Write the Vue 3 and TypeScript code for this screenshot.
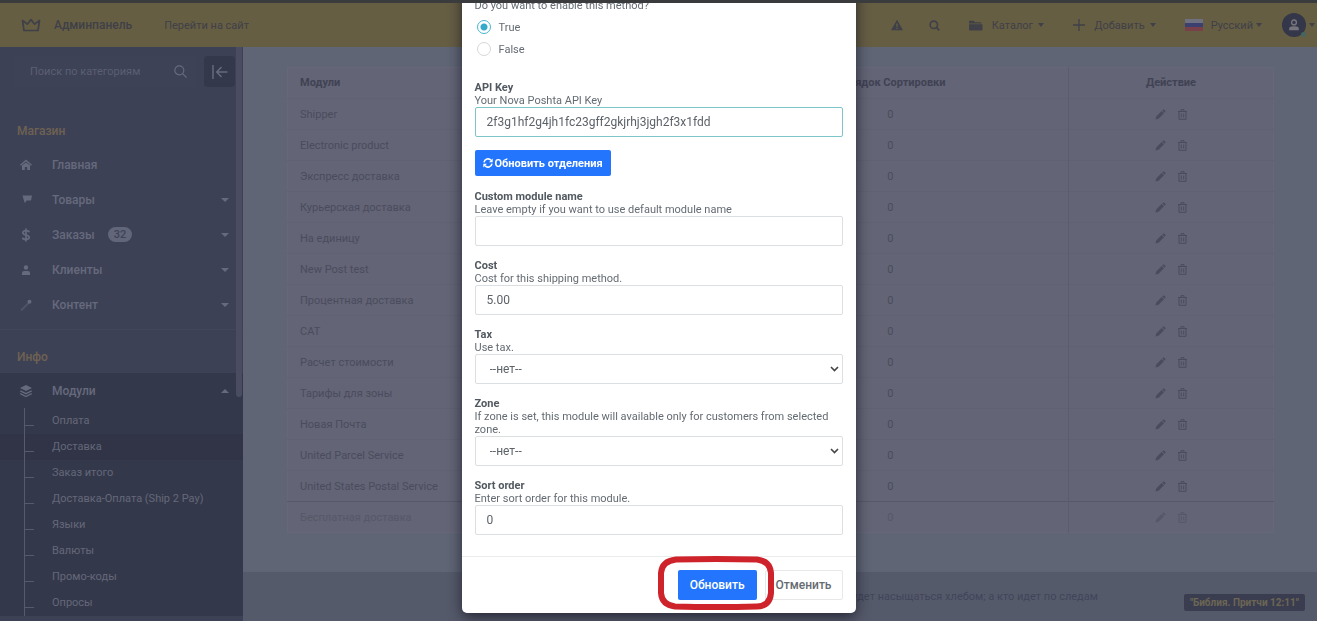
<script setup lang="ts">
import { ref } from 'vue'

interface NavItem {
  label: string
  icon: string
  badge?: string
  expandable: boolean
}

const shopItems: NavItem[] = [
  { label: 'Главная', icon: 'home', expandable: false },
  { label: 'Товары', icon: 'flag', expandable: true },
  { label: 'Заказы', icon: 'dollar', badge: '32', expandable: true },
  { label: 'Клиенты', icon: 'user', expandable: true },
  { label: 'Контент', icon: 'wand', expandable: true },
]

const moduleLinks: string[] = [
  'Оплата',
  'Доставка',
  'Заказ итого',
  'Доставка-Оплата (Ship 2 Pay)',
  'Языки',
  'Валюты',
  'Промо-коды',
  'Опросы',
]
const activeLink = 'Доставка'

const modules: { name: string; order: number; disabled?: boolean }[] = [
  { name: 'Shipper', order: 0 },
  { name: 'Electronic product', order: 0 },
  { name: 'Экспресс доставка', order: 0 },
  { name: 'Курьерская доставка', order: 0 },
  { name: 'На единицу', order: 0 },
  { name: 'New Post test', order: 0 },
  { name: 'Процентная доставка', order: 0 },
  { name: 'CAT', order: 0 },
  { name: 'Расчет стоимости', order: 0 },
  { name: 'Тарифы для зоны', order: 0 },
  { name: 'Новая Почта', order: 0 },
  { name: 'United Parcel Service', order: 0 },
  { name: 'United States Postal Service', order: 0 },
  { name: 'Бесплатная доставка', order: 0, disabled: true },
]

const categoryQuery = ref('')
const enabled = ref('true')
const apiKey = ref('2f3g1hf2g4jh1fc23gff2gkjrhj3jgh2f3x1fdd')
const moduleName = ref('')
const cost = ref('5.00')
const tax = ref('none')
const zone = ref('none')
const sortOrder = ref('0')
</script>

<template>
  <div class="page">
    <header class="topbar">
      <a class="brand" href="#">
        <svg width="20" height="14" viewBox="0 0 20 14" aria-hidden="true">
          <path d="M3 12.5 1.5 2.5 6.3 6.2 10 1.6 13.7 6.2 18.5 2.5 17 12.5Z" fill="none" stroke="currentColor" stroke-width="1.7" stroke-linejoin="round" />
        </svg>
        <span>Админпанель</span>
      </a>
      <a class="site-link" href="#">Перейти на сайт</a>

      <nav class="tools" aria-label="Инструменты">
        <button class="tool" type="button" aria-label="Уведомления">
          <svg width="12" height="12" viewBox="0 0 12 12">
            <path fill-rule="evenodd" d="M6 .7 12 11.3H0ZM5.3 4.4v3.4h1.4V4.4ZM5.3 8.7V10h1.4V8.7Z" fill="currentColor" />
          </svg>
        </button>
        <button class="tool tool-search" type="button" aria-label="Поиск">
          <svg width="11" height="11" viewBox="0 0 11 11">
            <circle cx="4.8" cy="4.8" r="3.7" fill="none" stroke="currentColor" stroke-width="1.6" />
            <path d="M7.4 7.4 10.3 10.3" stroke="currentColor" stroke-width="1.8" />
          </svg>
        </button>
        <button class="tool tool-menu" type="button">
          <svg width="14" height="11" viewBox="0 0 14 11">
            <path d="M0 1.5Q0 .7.8.7H4.6L6 2.2H11.5Q12.3 2.2 12.3 3V3.4H0ZM0 4.3H13.5V9.5Q13.5 10.4 12.6 10.4H.9Q0 10.4 0 9.5Z" fill="currentColor" />
          </svg>
          <span>Каталог</span><i class="caret"></i>
        </button>
        <button class="tool tool-menu" type="button">
          <svg width="12" height="12" viewBox="0 0 12 12">
            <path d="M6 0V12M0 6H12" stroke="currentColor" stroke-width="1.3" />
          </svg>
          <span>Добавить</span><i class="caret"></i>
        </button>
        <button class="tool tool-menu tool-lang" type="button">
          <svg width="18" height="12" viewBox="0 0 18 12">
            <path d="M0 0H18V4H0Z" fill="#6f7080" />
            <path d="M0 4H18V8H0Z" fill="#3b4070" />
            <path d="M0 8H18V12H0Z" fill="#784048" />
          </svg>
          <span>Русский</span><i class="caret"></i>
        </button>
        <button class="tool tool-user" type="button" aria-label="Профиль">
          <span class="avatar">
            <svg width="12" height="12" viewBox="0 0 12 12">
              <circle cx="6" cy="3.4" r="2.4" fill="none" stroke="currentColor" stroke-width="1.4" />
              <path d="M1.2 11.2V9.6Q1.2 7.2 6 7.2T10.8 9.6V11.2Z" fill="currentColor" />
            </svg>
            <i class="online"></i>
          </span>
          <i class="caret"></i>
        </button>
      </nav>
    </header>

    <div class="workspace">
      <aside class="sidebar">
        <div class="search-row">
          <label class="search">
            <input v-model="categoryQuery" type="text" placeholder="Поиск по категориям" aria-label="Поиск по категориям" />
            <svg width="13" height="13" viewBox="0 0 13 13" aria-hidden="true">
              <circle cx="5.3" cy="5.3" r="4.5" fill="none" stroke="currentColor" stroke-width="1.2" />
              <path d="M8.6 8.6 12.5 12.5" stroke="currentColor" stroke-width="1.2" />
            </svg>
          </label>
          <button class="collapse" type="button" aria-label="Свернуть меню">
            <svg width="16" height="14" viewBox="0 0 16 14">
              <path d="M1 0V14M15.5 7H5M9.5 2 4.7 7 9.5 12" fill="none" stroke="currentColor" stroke-width="1.5" />
            </svg>
          </button>
        </div>

        <h2 class="section-title">Магазин</h2>
        <ul class="nav">
          <li v-for="item in shopItems" :key="item.label">
            <a class="nav-link" href="#">
              <svg class="nav-icon" width="12" height="14" viewBox="0 0 12 14" aria-hidden="true">
                <g v-if="item.icon === 'home'">
                  <path d="M.5 7.2 6 2.5 11.5 7.2" fill="none" stroke="currentColor" stroke-width="1.5" />
                  <path d="M2 7.6 6 4.5 10 7.6V12H7.2V9H4.8V12H2Z" fill="currentColor" />
                </g>
                <path v-else-if="item.icon === 'flag'" d="M2.500 2.500H12L11 7.500H6.500L5.500 9.500H4.500Z" fill="currentColor" />
                <path v-else-if="item.icon === 'dollar'" d="M9.2 4.3Q8.8 2.6 6 2.6T2.9 4.7Q2.9 6.3 6 7T9.2 9.3Q9.2 11.5 6 11.5T2.6 9.6M6 .4V13.6" fill="none" stroke="currentColor" stroke-width="1.7" />
                <g v-else-if="item.icon === 'user'" fill="currentColor">
                  <circle cx="6" cy="4.5" r="2.2" />
                  <path d="M2 12V9.8Q2 8 4 8H8Q10 8 10 9.8V12Z" />
                </g>
                <g v-else>
                  <path d="M1 12.5 8.5 5" stroke="currentColor" stroke-width="1.8" opacity=".45" />
                  <circle cx="9.5" cy="3.8" r="2" fill="currentColor" />
                </g>
              </svg>
              <span>{{ item.label }}</span>
              <span v-if="item.badge" class="badge">{{ item.badge }}</span>
              <i v-if="item.expandable" class="caret nav-caret"></i>
            </a>
          </li>
        </ul>

        <h2 class="section-title section-info">Инфо</h2>
        <div class="expanded">
          <a class="nav-link" href="#">
            <svg class="nav-icon" width="12" height="14" viewBox="0 0 12 14" aria-hidden="true">
              <path d="M6 1 12 4 6 7 0 4Z" fill="currentColor" />
              <path d="M.3 6.9 6 9.7 11.7 6.9M.3 9.7 6 12.5 11.7 9.7" fill="none" stroke="currentColor" stroke-width="1.3" />
            </svg>
            <span>Модули</span>
            <i class="caret caret-up nav-caret"></i>
          </a>
          <ul class="subnav">
            <li v-for="link in moduleLinks" :key="link" :class="{ active: link === activeLink }">
              <a href="#">{{ link }}</a>
            </li>
          </ul>
        </div>
        <div class="scroll-thumb"></div>
      </aside>

      <div class="content">
        <main class="main">
          <table class="modules">
            <thead>
              <tr>
                <th class="col-name" scope="col">Модули</th>
                <th class="col-order" scope="col">Порядок Сортировки</th>
                <th class="col-action" scope="col">Действие</th>
              </tr>
            </thead>
            <tbody>
              <tr v-for="row in modules" :key="row.name" :class="{ disabled: row.disabled }">
                <td class="col-name">{{ row.name }}</td>
                <td>{{ row.order }}</td>
                <td>
                  <div class="actions">
                    <button type="button" aria-label="Редактировать">
                      <svg width="11" height="11" viewBox="0 0 11 11">
                        <path d="M.5 10.5 1.2 7.5 6.7 2 9 4.3 3.5 9.8ZM7.3 1.4 8.2.6Q8.7.2 9.2.7L10.3 1.8Q10.8 2.3 10.4 2.8L9.6 3.7Z" fill="currentColor" />
                      </svg>
                    </button>
                    <button type="button" aria-label="Удалить">
                      <svg width="9" height="11" viewBox="0 0 9 11">
                        <path d="M0 2.5H9M3 2.5V.7H6V2.5M1 2.5V10.3H8V2.5M3.3 4.5V8.5M5.7 4.5V8.5" fill="none" stroke="currentColor" />
                      </svg>
                    </button>
                  </div>
                </td>
              </tr>
            </tbody>
          </table>
        </main>
        <footer class="footer">
          <p>будет насыщаться хлебом; а кто идет по следам</p>
          <span class="quote">"Библия. Притчи 12:11"</span>
        </footer>
      </div>
    </div>

    <div class="overlay">
      <form class="modal" role="dialog" aria-label="Настройки модуля" @submit.prevent>
        <div class="modal-body">
          <fieldset class="choice">
            <legend>Do you want to enable this method?</legend>
            <label><input v-model="enabled" type="radio" name="enabled" value="true" />True</label>
            <label><input v-model="enabled" type="radio" name="enabled" value="false" />False</label>
          </fieldset>

          <div class="field">
            <label for="api-key">API Key</label>
            <p>Your Nova Poshta API Key</p>
            <input id="api-key" v-model="apiKey" class="control current" type="text" />
          </div>

          <button class="btn primary refresh" type="button">
            <svg width="10" height="10" viewBox="0 0 10 10" aria-hidden="true">
              <path d="M1 4.3A4 4 0 0 1 8 2.3M9 5.7A4 4 0 0 1 2 7.7" fill="none" stroke="currentColor" stroke-width="1.6" />
              <path d="M9.7.5V4.2H6ZM.3 9.5V5.8H4Z" fill="currentColor" />
            </svg>
            Обновить отделения
          </button>

          <div class="field">
            <label for="module-name">Custom module name</label>
            <p>Leave empty if you want to use default module name</p>
            <input id="module-name" v-model="moduleName" class="control" type="text" />
          </div>
          <div class="field">
            <label for="cost">Cost</label>
            <p>Cost for this shipping method.</p>
            <input id="cost" v-model="cost" class="control" type="text" />
          </div>
          <div class="field">
            <label for="tax">Tax</label>
            <p>Use tax.</p>
            <div class="select">
              <select id="tax" v-model="tax" class="control">
                <option value="none">--нет--</option>
              </select>
              <svg width="9" height="6" viewBox="0 0 9 6" aria-hidden="true"><path d="M1 1 4.5 4.5 8 1" fill="none" stroke="#444" stroke-width="1.6" /></svg>
            </div>
          </div>
          <div class="field">
            <label for="zone">Zone</label>
            <p>If zone is set, this module will available only for customers from selected zone.</p>
            <div class="select">
              <select id="zone" v-model="zone" class="control">
                <option value="none">--нет--</option>
              </select>
              <svg width="9" height="6" viewBox="0 0 9 6" aria-hidden="true"><path d="M1 1 4.5 4.5 8 1" fill="none" stroke="#444" stroke-width="1.6" /></svg>
            </div>
          </div>
          <div class="field">
            <label for="sort-order">Sort order</label>
            <p>Enter sort order for this module.</p>
            <input id="sort-order" v-model="sortOrder" class="control" type="text" />
          </div>
        </div>
        <div class="modal-footer">
          <div class="marked">
            <button class="btn primary" type="submit">Обновить</button>
            <svg class="ring" width="116" height="54" viewBox="0 0 116 54" aria-hidden="true">
              <path d="M18 3.5Q58 2.5 99 3.5Q112 5 113 17V37Q112 50 99 50.5Q58 51.5 17 50.5Q4 49 3 37V17Q4 5 18 3.5Z" fill="none" stroke="#cf232b" stroke-width="6" />
            </svg>
          </div>
          <button class="btn secondary" type="button">Отменить</button>
        </div>
      </form>
    </div>
  </div>
</template>

<style>
body {
  margin: 0;
  background: #5f6575;
}
</style>

<style scoped>
* {
  box-sizing: border-box;
}
.page {
  height: 100vh;
  display: flex;
  flex-direction: column;
  overflow: hidden;
  border-top: 3px solid #3a3b3d;
  font-family: Roboto, "Liberation Sans", sans-serif;
  font-size: 11px;
  color: #3d4051;
}
button,
input,
select {
  font: inherit;
  color: inherit;
}
button {
  padding: 0;
  border: 0;
  background: none;
}
a {
  color: inherit;
  text-decoration: none;
}
svg {
  display: block;
  flex: none;
}
ul,
p,
h2 {
  margin: 0;
  padding: 0;
  list-style: none;
}
.caret {
  flex: none;
  border: 4px solid transparent;
  border-top-color: currentColor;
  border-bottom: 0;
}
.caret-up {
  border-top: 0;
  border-bottom: 4px solid currentColor;
}

/* top bar */
.topbar {
  flex: none;
  height: 44px;
  padding: 0 2px 0 21px;
  display: flex;
  align-items: center;
  background: #665e43;
  color: #3f4048;
}
.brand {
  display: flex;
  align-items: center;
  gap: 13px;
  font-size: 12px;
  font-weight: 500;
}
.site-link {
  margin-left: 32px;
}
.tools {
  margin-left: auto;
  display: flex;
  align-items: center;
}
.tool {
  display: flex;
  align-items: center;
}
.tool .caret {
  border-width: 4px 3px 0;
}
.tool-search {
  margin-left: 26px;
}
.tool-menu {
  margin-left: 29px;
}
.tool-menu span {
  margin: 0 5px 0 9px;
}
.tool-lang span {
  margin: 0 3px 0 8px;
}
.tool-user {
  gap: 3px;
  margin-left: 20px;
}
.avatar {
  position: relative;
  width: 24px;
  height: 24px;
  display: grid;
  place-items: center;
  border-radius: 50%;
  background: #34364a;
  color: #77757c;
}
.online {
  position: absolute;
  right: 0;
  bottom: 0;
  width: 5px;
  height: 5px;
  border-radius: 50%;
  background: #45665f;
}

/* sidebar */
.workspace {
  flex: 1;
  min-height: 0;
  display: flex;
}
.sidebar {
  position: relative;
  flex: none;
  width: 243px;
  overflow: hidden;
  background: #3d4155;
  color: #666a7d;
}
.search-row {
  display: flex;
  align-items: center;
  gap: 8px;
  padding: 9px 8px 0 14px;
}
.search {
  flex: 1;
  min-width: 0;
  height: 31px;
  display: flex;
  align-items: center;
  padding: 0 9px 0 16px;
  background: #3e4257;
}
.search input {
  flex: 1;
  min-width: 0;
  padding: 0;
  border: 0;
  outline: 0;
  background: none;
}
.search input::placeholder {
  color: #5b5f72;
}
.collapse {
  width: 31px;
  height: 31px;
  display: grid;
  place-items: center;
  border-radius: 4px;
  background: #34384b;
}
.section-title {
  padding: 36px 0 8px 17px;
  font-size: 12px;
  line-height: 16px;
  font-weight: 500;
  color: #6f6152;
}
.section-info {
  margin-top: 7px;
  border-top: 1px solid #42465a;
  padding-top: 19px;
}
.nav-link {
  height: 35px;
  display: flex;
  align-items: center;
  padding: 0 14px 0 20px;
  font-size: 12px;
  font-weight: 500;
}
.nav-icon {
  margin-right: 20px;
}
.badge {
  margin-left: 13px;
  padding: 0 6px;
  border-radius: 8px;
  font-size: 11px;
  line-height: 15px;
  background: #62667a;
  color: #3f4357;
}
.nav-caret {
  margin-left: auto;
}
.expanded {
  background: #34384b;
}
.subnav li {
  position: relative;
}
.subnav li::before {
  content: "";
  position: absolute;
  left: 24px;
  top: 0;
  width: 10px;
  height: 17px;
  border-bottom: 1px solid #565a6c;
}
.subnav li::after {
  content: "";
  position: absolute;
  left: 24px;
  top: 0;
  bottom: 0;
  border-left: 1px solid #565a6c;
}
.subnav a {
  display: block;
  padding-left: 52px;
  line-height: 26px;
  color: #646879;
}
.subnav .active {
  background: #303446;
}
.scroll-thumb {
  position: absolute;
  top: 0;
  right: 1px;
  width: 6px;
  height: 350px;
  border-radius: 0 0 3px 3px;
  background: #4a4d61;
}

/* content */
.content {
  flex: 1;
  min-width: 0;
  display: flex;
  flex-direction: column;
}
.main {
  flex: 1;
  padding: 20px 43px 0 44px;
}
.modules {
  width: 100%;
  border-collapse: collapse;
  table-layout: fixed;
  background: #636475;
  border: 1px solid #666879;
  color: #4a4c5e;
  text-align: center;
}
.modules th {
  height: 31px;
  padding: 0 0 2px;
  font-weight: 700;
  color: #404254;
}
.modules td {
  height: 31px;
  padding: 0;
  border-top: 1px solid #606173;
}
.modules .col-name {
  padding-left: 12px;
  text-align: left;
}
.modules .col-order {
  width: 356px;
}
.modules .col-action {
  width: 205px;
}
.modules th:last-child,
.modules td:last-child {
  border-left: 1px solid #5b5d6e;
}
.modules .disabled {
  color: #565869;
}
.modules .disabled td {
  border-top-color: #575969;
}
.actions {
  display: flex;
  justify-content: center;
  align-items: center;
  gap: 12px;
}
.footer {
  flex: none;
  height: 49px;
  display: flex;
  align-items: center;
  justify-content: flex-end;
  gap: 86px;
  padding-right: 12px;
  background: #555a6a;
  color: #41455a;
}
.quote {
  align-self: flex-end;
  margin-bottom: 10px;
  padding: 0 6px;
  border-radius: 2px;
  font-size: 10px;
  font-weight: 700;
  line-height: 17px;
  background: #3a3d50;
  color: #6c6654;
}

/* dialog */
.overlay {
  position: fixed;
  inset: 3px 0 0;
  display: flex;
  justify-content: center;
  align-items: flex-end;
  padding-bottom: 8px;
  overflow: hidden;
}
.modal {
  width: 394px;
  border-radius: 5px;
  background: #fff;
  color: #646b72;
  box-shadow: 0 4px 14px rgba(20, 20, 35, 0.75);
  line-height: 13px;
}
.modal-body {
  padding: 13px 13px 21px;
}
.choice {
  margin: 0 0 21px;
  padding: 0;
  border: 0;
}
.choice legend {
  padding: 0 0 4px;
}
.choice label {
  height: 22px;
  display: flex;
  align-items: center;
}
.choice input {
  appearance: none;
  width: 14px;
  height: 14px;
  margin: 0 8px 0 2px;
  border: 1px solid #d5d7da;
  border-radius: 50%;
  background: #fff;
}
.choice input:checked {
  border-color: #46b5cf;
  background: radial-gradient(circle, #35aac9 3px, #fff 4px);
}
.field + .field {
  margin-top: 13px;
}
.field > label {
  display: block;
  font-weight: 700;
  color: #51585f;
}
.control {
  display: block;
  width: 100%;
  height: 30px;
  padding: 0 11px;
  border: 1px solid #dcdfe2;
  border-radius: 2px;
  outline: 0;
  background: #fff;
  font-size: 12px;
  color: #5c6268;
}
.current {
  border-color: #7cc5c9;
}
.select {
  position: relative;
}
.select .control {
  appearance: none;
  padding: 0 24px 0 14px;
}
.select svg {
  position: absolute;
  right: 4px;
  top: 12px;
  pointer-events: none;
}
.btn {
  height: 30px;
  padding: 0 12px;
  border-radius: 2px;
  font-size: 12px;
  font-weight: 500;
  white-space: nowrap;
}
.primary {
  background: #2275fc;
  color: #fff;
}
.refresh {
  display: flex;
  align-items: center;
  gap: 2px;
  height: 26px;
  margin: 13px 0 14px;
  padding: 0 8px;
  font-size: 11px;
  font-weight: 700;
}
.modal-footer {
  display: flex;
  justify-content: flex-end;
  gap: 8px;
  padding: 13px;
  border-top: 1px solid #e9ebed;
}
.secondary {
  border: 1px solid #e6e8ea;
  background: #fff;
  padding: 0 10px;
}
.marked {
  position: relative;
}
.ring {
  position: absolute;
  left: -20px;
  top: -14px;
  z-index: 1;
  pointer-events: none;
}
</style>
